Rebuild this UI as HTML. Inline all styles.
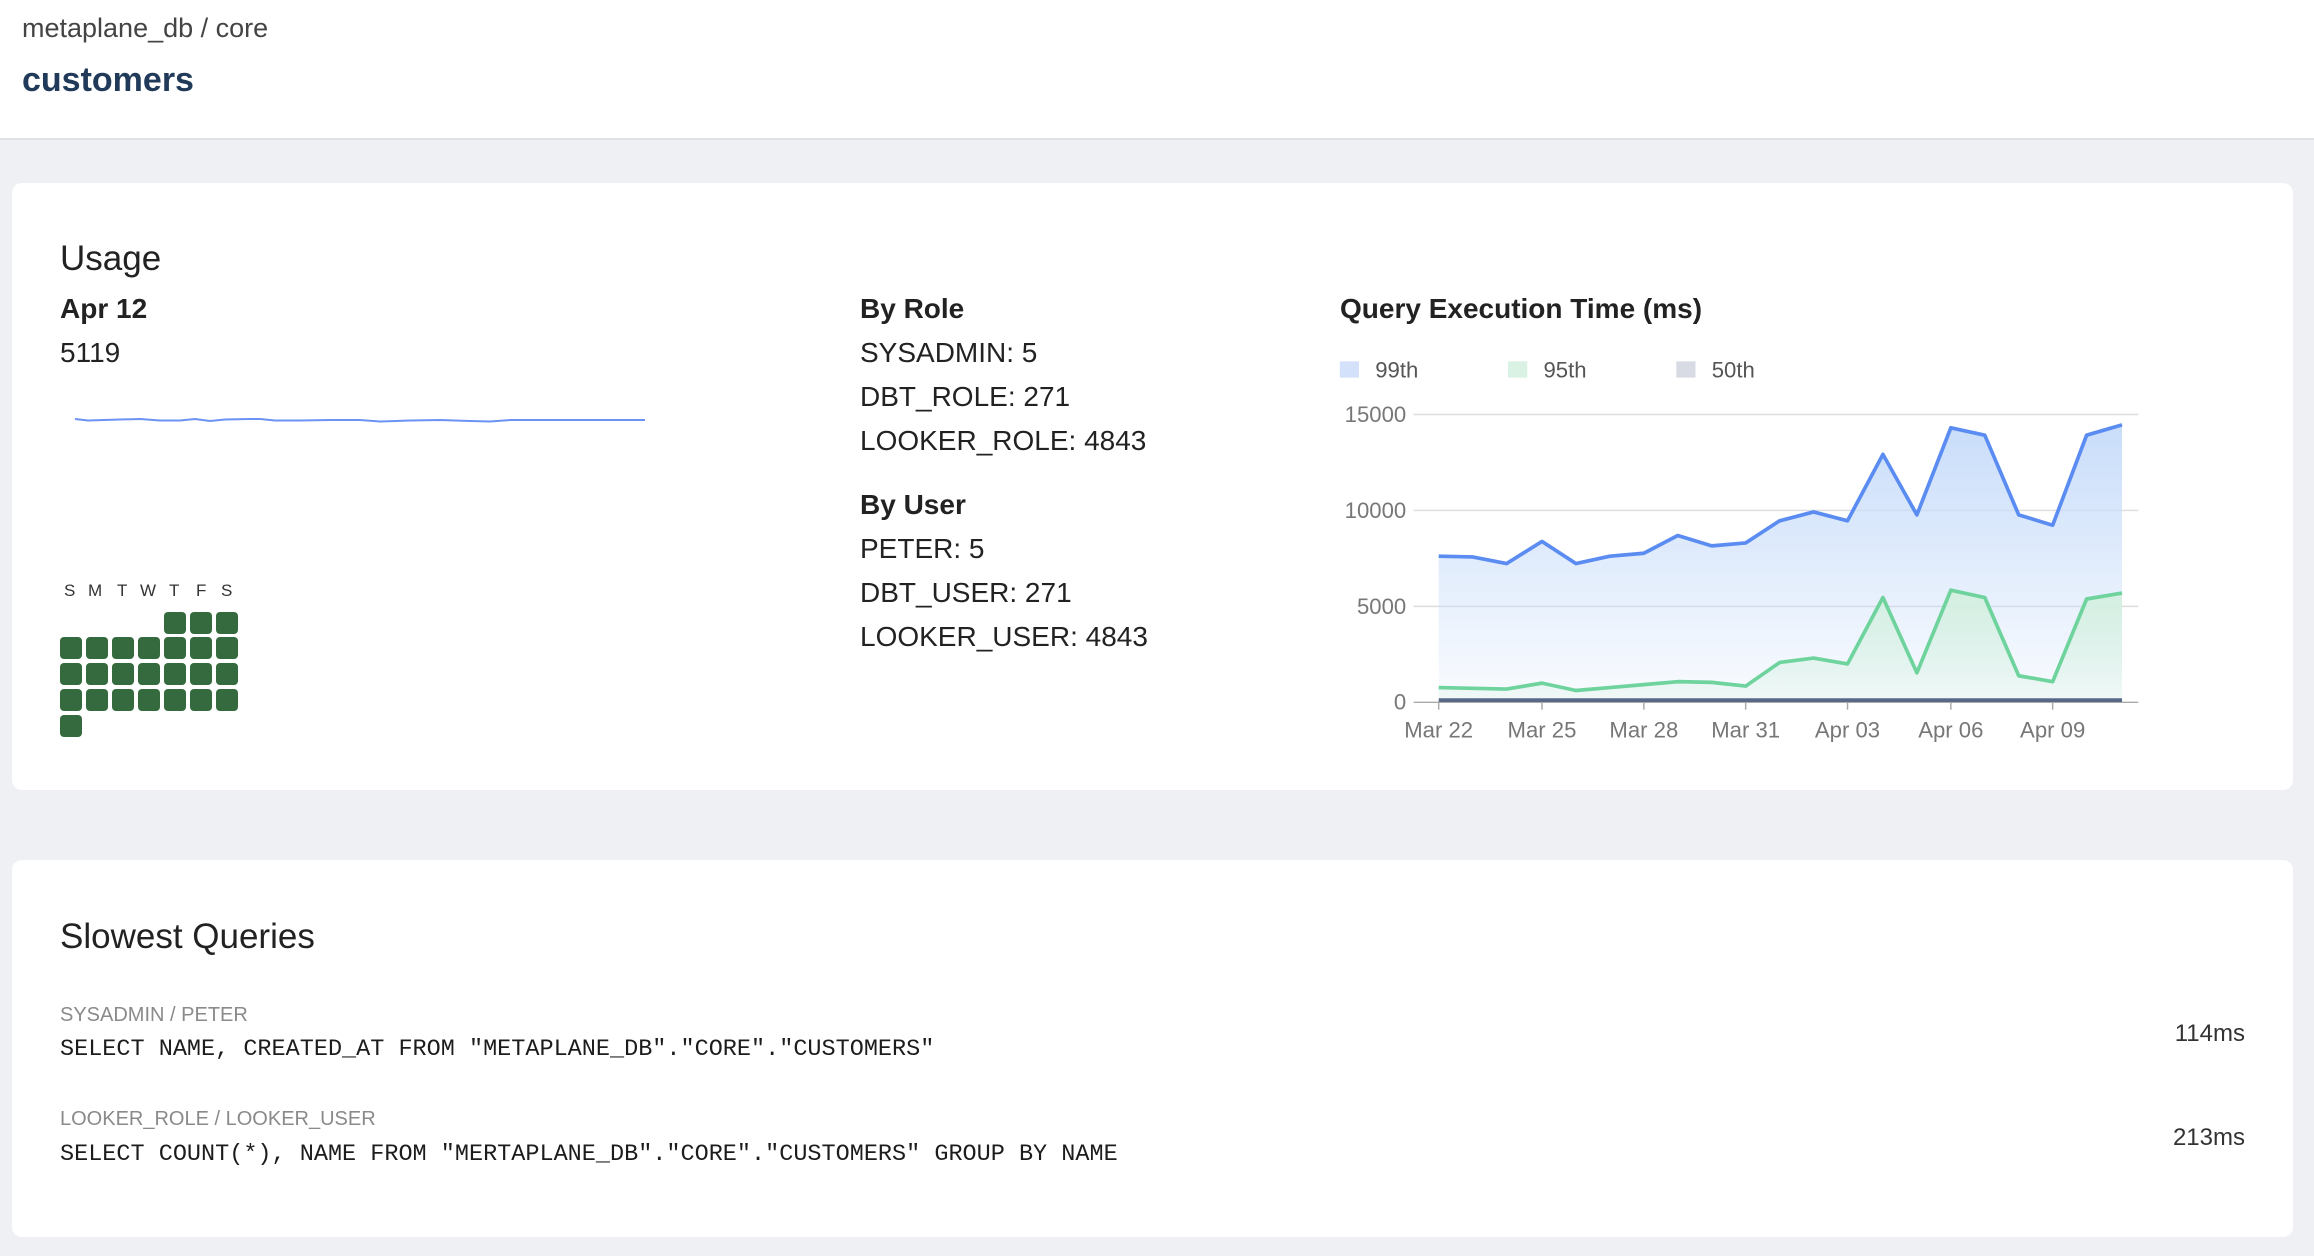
<!DOCTYPE html>
<html><head><meta charset="utf-8"><style>
*{margin:0;padding:0;box-sizing:border-box}
body{width:2314px;height:1256px;background:#eef0f3;font-family:"Liberation Sans",sans-serif;color:#222;position:relative;overflow:hidden}
.hdr{position:absolute;left:0;top:0;width:2314px;height:140px;background:#fff;border-bottom:2px solid #dfe1e5}
.a{position:absolute;white-space:nowrap}
.card{position:absolute;background:#fff;border-radius:10px}
.cell{position:absolute;width:22px;height:22px;background:#356a3e;border-radius:4px}
.mono{font-family:"Liberation Mono",monospace;font-size:23.5px;color:#1c1c1c}
.lbl{font-size:20px;color:#8a8a8a}
</style></head><body>
<div class="hdr"></div>
<div class="a" style="left:22px;top:13px;font-size:27px;color:#444">metaplane_db / core</div>
<div class="a" style="left:22px;top:61px;font-size:34px;font-weight:bold;color:#213a5a">customers</div>

<div class="card" style="left:12px;top:183px;width:2281px;height:607px"></div>
<div class="a" style="left:60px;top:239px;font-size:35px;color:#222">Usage</div>
<div class="a" style="left:60px;top:293px;font-size:28px;font-weight:bold">Apr 12</div>
<div class="a" style="left:60px;top:337px;font-size:28px">5119</div>
<svg class="a" style="left:70px;top:410px" width="590" height="20" viewBox="0 0 590 20"><polyline fill="none" stroke="#6b93f5" stroke-width="2" points="5,9 18,10.5 50,9.5 70,9 90,10.5 110,10.5 125,9 140,11 155,9.5 180,9 190,9 205,10.5 230,10.5 260,10 290,10 310,11.5 340,10.5 370,10 400,11 420,11.5 440,10 575,10"/></svg>
<div class="a" style="left:64px;top:581px;font-size:17px;color:#333;word-spacing:0">
<span style="position:absolute;left:0">S</span><span style="position:absolute;left:24px">M</span><span style="position:absolute;left:53px">T</span><span style="position:absolute;left:76px">W</span><span style="position:absolute;left:105px">T</span><span style="position:absolute;left:132px">F</span><span style="position:absolute;left:157px">S</span></div>
<div class="cell" style="left:164px;top:612px"></div><div class="cell" style="left:190px;top:612px"></div><div class="cell" style="left:216px;top:612px"></div>
<div class="cell" style="left:60px;top:637px"></div><div class="cell" style="left:86px;top:637px"></div><div class="cell" style="left:112px;top:637px"></div><div class="cell" style="left:138px;top:637px"></div><div class="cell" style="left:164px;top:637px"></div><div class="cell" style="left:190px;top:637px"></div><div class="cell" style="left:216px;top:637px"></div>
<div class="cell" style="left:60px;top:663px"></div><div class="cell" style="left:86px;top:663px"></div><div class="cell" style="left:112px;top:663px"></div><div class="cell" style="left:138px;top:663px"></div><div class="cell" style="left:164px;top:663px"></div><div class="cell" style="left:190px;top:663px"></div><div class="cell" style="left:216px;top:663px"></div>
<div class="cell" style="left:60px;top:689px"></div><div class="cell" style="left:86px;top:689px"></div><div class="cell" style="left:112px;top:689px"></div><div class="cell" style="left:138px;top:689px"></div><div class="cell" style="left:164px;top:689px"></div><div class="cell" style="left:190px;top:689px"></div><div class="cell" style="left:216px;top:689px"></div>
<div class="cell" style="left:60px;top:715px"></div>

<div class="a" style="left:860px;top:293px;font-size:28px;font-weight:bold">By Role</div>
<div class="a" style="left:860px;top:337px;font-size:28px">SYSADMIN: 5</div>
<div class="a" style="left:860px;top:381px;font-size:28px">DBT_ROLE: 271</div>
<div class="a" style="left:860px;top:425px;font-size:28px">LOOKER_ROLE: 4843</div>
<div class="a" style="left:860px;top:489px;font-size:28px;font-weight:bold">By User</div>
<div class="a" style="left:860px;top:533px;font-size:28px">PETER: 5</div>
<div class="a" style="left:860px;top:577px;font-size:28px">DBT_USER: 271</div>
<div class="a" style="left:860px;top:621px;font-size:28px">LOOKER_USER: 4843</div>

<div class="a" style="left:1340px;top:293px;font-size:28px;font-weight:bold">Query Execution Time (ms)</div>
<svg class="a" style="left:1328px;top:354px" width="826.5" height="398.5" viewBox="900 240 560 270" font-family="Liberation Sans, sans-serif">
<defs>
<linearGradient id="gb" x1="0" y1="0" x2="0" y2="1"><stop offset="0" stop-color="#c9ddfa"/><stop offset="1" stop-color="#c9ddfa" stop-opacity="0.1"/></linearGradient>
<linearGradient id="gg" x1="0" y1="0" x2="0" y2="1"><stop offset="0" stop-color="#d4f0e0"/><stop offset="1" stop-color="#d4f0e0" stop-opacity="0.2"/></linearGradient>
</defs>
<rect x="908" y="245" width="13" height="11" fill="#d3e1fb"/><text x="932" y="256" font-size="15" fill="#555">99th</text>
<rect x="1022" y="245" width="13" height="11" fill="#d9f2e4"/><text x="1046" y="256" font-size="15" fill="#555">95th</text>
<rect x="1136" y="245" width="13" height="11" fill="#d8dbe3"/><text x="1160" y="256" font-size="15" fill="#555">50th</text>
<g stroke="#dcdcdc" stroke-width="1"><line x1="958" y1="281" x2="1449" y2="281"/><line x1="958" y1="346" x2="1449" y2="346"/><line x1="958" y1="411" x2="1449" y2="411"/></g>
<g font-size="15" fill="#777" text-anchor="end"><text x="953" y="286">15000</text><text x="953" y="351">10000</text><text x="953" y="416">5000</text><text x="953" y="481">0</text></g>
<polygon fill="url(#gb)" points="975,476 975,377 998,377.5 1021,382 1045,367 1068,382 1091,377 1114,375 1137,363 1160,370 1183,368 1206,353 1229,347 1252,353 1276,308 1299,349 1322,290 1345,295 1368,349 1391,356 1414,295 1438,288 1438,476"/>
<polygon fill="url(#gg)" points="975,476 975,466 998,466.5 1021,467 1045,463 1068,468 1091,466 1114,464 1137,462 1160,462.5 1183,465 1206,449 1229,446 1252,450 1276,405 1299,456 1322,400 1345,405 1368,458 1391,462 1414,406 1438,402 1438,476"/>
<polyline fill="none" stroke="#5b8cf2" stroke-width="2.5" stroke-linejoin="round" points="975,377 998,377.5 1021,382 1045,367 1068,382 1091,377 1114,375 1137,363 1160,370 1183,368 1206,353 1229,347 1252,353 1276,308 1299,349 1322,290 1345,295 1368,349 1391,356 1414,295 1438,288"/>
<polyline fill="none" stroke="#6fd39d" stroke-width="2.5" stroke-linejoin="round" points="975,466 998,466.5 1021,467 1045,463 1068,468 1091,466 1114,464 1137,462 1160,462.5 1183,465 1206,449 1229,446 1252,450 1276,405 1299,456 1322,400 1345,405 1368,458 1391,462 1414,406 1438,402"/>
<line x1="958" y1="476" x2="1449" y2="476" stroke="#aaa" stroke-width="1"/>
<line x1="975" y1="474.5" x2="1438" y2="474.5" stroke="#5a6887" stroke-width="2.5"/>
<g stroke="#aaa"><line x1="975" y1="476" x2="975" y2="481"/><line x1="1045" y1="476" x2="1045" y2="481"/><line x1="1114" y1="476" x2="1114" y2="481"/><line x1="1183" y1="476" x2="1183" y2="481"/><line x1="1252" y1="476" x2="1252" y2="481"/><line x1="1322" y1="476" x2="1322" y2="481"/><line x1="1391" y1="476" x2="1391" y2="481"/></g>
<g font-size="15" fill="#777" text-anchor="middle"><text x="975" y="500">Mar 22</text><text x="1045" y="500">Mar 25</text><text x="1114" y="500">Mar 28</text><text x="1183" y="500">Mar 31</text><text x="1252" y="500">Apr 03</text><text x="1322" y="500">Apr 06</text><text x="1391" y="500">Apr 09</text></g>
</svg>

<div class="card" style="left:12px;top:860px;width:2281px;height:377px"></div>
<div class="a" style="left:60px;top:917px;font-size:35px;color:#222">Slowest Queries</div>
<div class="a lbl" style="left:60px;top:1004px">SYSADMIN / PETER</div>
<div class="a mono" style="left:60px;top:1036px">SELECT NAME, CREATED_AT FROM "METAPLANE_DB"."CORE"."CUSTOMERS"</div>
<div class="a" style="right:69px;top:1020px;font-size:24px;color:#333">114ms</div>
<div class="a lbl" style="left:60px;top:1108px">LOOKER_ROLE / LOOKER_USER</div>
<div class="a mono" style="left:60px;top:1141px">SELECT COUNT(*), NAME FROM "MERTAPLANE_DB"."CORE"."CUSTOMERS" GROUP BY NAME</div>
<div class="a" style="right:69px;top:1124px;font-size:24px;color:#333">213ms</div>
</body></html>
